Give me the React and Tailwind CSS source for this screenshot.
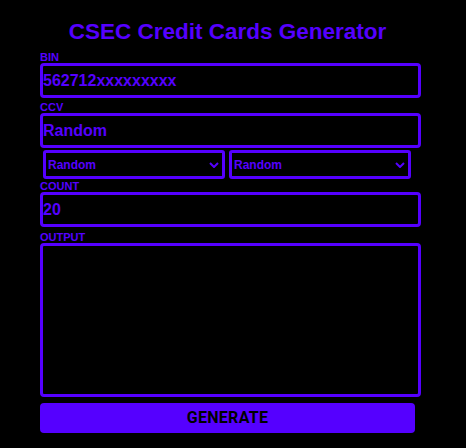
import React, { useState } from 'react';

const purple = 'text-[#5500ff]';

const Label = ({ children, className = '' }) => (
  <label className={`block h-[12px] text-[11px] leading-[12px] font-bold ${purple} ${className}`}>
    {children}
  </label>
);

const Chevron = () => (
  <svg
    className="pointer-events-none absolute right-[6px] top-[12px]"
    width="10"
    height="6"
    viewBox="0 0 10 6"
    fill="none"
  >
    <path d="M1 1l4 4 4-4" stroke="#5500ff" strokeWidth="2" />
  </svg>
);

const Select = ({ value, onChange }) => (
  <div className="relative w-[182px]">
    <select
      value={value}
      onChange={e => onChange(e.target.value)}
      className="block h-[29px] w-full appearance-none rounded-[3px] border-[3px] border-[#5500ff] bg-black pl-[2px] text-[12px] font-bold text-[#5500ff] outline-none"
    >
      <option>Random</option>
      {Array.from({ length: 12 }, (_, i) => (
        <option key={i}>{String(i + 1).padStart(2, '0')}</option>
      ))}
    </select>
    <Chevron />
  </div>
);

const App = () => {
  const [bin, setBin] = useState('562712xxxxxxxxx');
  const [ccv, setCcv] = useState('Random');
  const [month, setMonth] = useState('Random');
  const [year, setYear] = useState('Random');
  const [count, setCount] = useState('20');
  const [output, setOutput] = useState('');

  const inputCls =
    'block h-[35px] w-full rounded-[4px] border-[3px] border-[#5500ff] bg-black px-0 text-[16px] font-bold text-[#5500ff] outline-none';

  return (
    <div className="min-h-[448px] bg-black pt-[18px] font-['Liberation_Sans',Arial,sans-serif]">
      <div className="ml-[40px] w-[381px]">
        <h1 className={`w-[375px] text-center text-[22.5px] leading-[28px] font-bold ${purple}`}>
          CSEC Credit Cards Generator
        </h1>

        <Label className="mt-[5px]">BIN</Label>
        <input className={inputCls} value={bin} onChange={e => setBin(e.target.value)} />

        <Label className="mt-[3px]">CCV</Label>
        <input className={inputCls} value={ccv} onChange={e => setCcv(e.target.value)} />

        <div className="mt-[2px] flex gap-[4px] pl-[3px]">
          <Select value={month} onChange={setMonth} />
          <Select value={year} onChange={setYear} />
        </div>

        <Label className="mt-[1px]">COUNT</Label>
        <input className={inputCls} value={count} onChange={e => setCount(e.target.value)} />

        <Label className="mt-[4px]">OUTPUT</Label>
        <textarea
          className="block h-[154px] w-full resize-none rounded-[4px] border-[3px] border-[#5500ff] bg-black text-[14px] text-[#5500ff] outline-none"
          value={output}
          onChange={e => setOutput(e.target.value)}
        />

        <button
          onClick={() => setOutput('')}
          className="mt-[6px] block h-[30px] w-[375px] rounded-[4px] bg-[#5500ff] text-[16px] font-bold tracking-[0.3px] text-black font-['Roboto',sans-serif]"
        >
          GENERATE
        </button>
      </div>
    </div>
  );
};

export default App;
